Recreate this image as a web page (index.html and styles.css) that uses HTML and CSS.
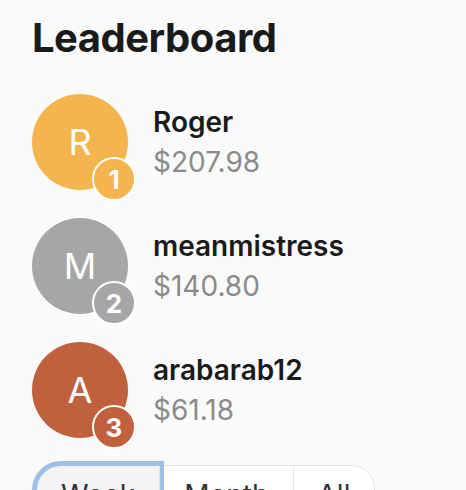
FILE: index.html
```html
<!DOCTYPE html>
<html>
<head>
<meta charset="utf-8">
<link rel="stylesheet" href="styles.css">
</head>
<body>
<main class="board">
  <h1 class="title">Leaderboard</h1>
  <ul class="list">
    <li class="row">
      <div class="avatar gold">R<span class="rank">1</span></div>
      <div class="info"><div class="name">Roger</div><div class="amount">$207.98</div></div>
    </li>
    <li class="row">
      <div class="avatar silver">M<span class="rank">2</span></div>
      <div class="info"><div class="name">meanmistress</div><div class="amount">$140.80</div></div>
    </li>
    <li class="row">
      <div class="avatar bronze">A<span class="rank">3</span></div>
      <div class="info"><div class="name">arabarab12</div><div class="amount">$61.18</div></div>
    </li>
  </ul>
  <div class="tabs">
    <button class="tab active">Week</button>
    <button class="tab">Month</button>
    <button class="tab">All</button>
  </div>
</main>
</body>
</html>
```
FILE: styles.css
```css
html, body {
  margin: 0;
  background: #fafafa;
  font-family: Inter, "Noto Sans", sans-serif;
  color: #1a1a1a;
}
.board {
  padding: 16px 32px 0;
}
.title {
  margin: 0;
  font-size: 40px;
  font-weight: 700;
  line-height: 44px;
  letter-spacing: -0.5px;
}
.list {
  list-style: none;
  margin: 34px 0 0;
  padding: 0;
  display: flex;
  flex-direction: column;
  gap: 28px;
}
.row {
  display: flex;
  align-items: center;
  gap: 25px;
}
.avatar {
  position: relative;
  width: 96px;
  height: 96px;
  border-radius: 50%;
  display: flex;
  align-items: center;
  justify-content: center;
  color: #fff;
  font-size: 36px;
  font-weight: 400;
  flex: none;
}
.gold { background: #f4b54e; }
.silver { background: #a6a6a6; }
.bronze { background: #c0603d; }
.rank {
  position: absolute;
  right: -8px;
  bottom: -11px;
  width: 40px;
  height: 40px;
  border: 2px solid #fff;
  border-radius: 50%;
  background: inherit;
  display: flex;
  align-items: center;
  justify-content: center;
  font-size: 26px;
  font-weight: 700;
}
.info {
  display: flex;
  flex-direction: column;
}
.name {
  font-size: 28px;
  font-weight: 600;
  line-height: 40px;
}
.amount {
  font-size: 28px;
  color: #8a8a8a;
  line-height: 40px;
}
.tabs {
  display: inline-flex;
  margin: 27px 0 0 4px;
  border: 1px solid #e4e4e4;
  border-radius: 24px;
  background: #fff;
}
.tab {
  font-family: inherit;
  font-size: 28px;
  line-height: 34px;
  color: #333;
  background: transparent;
  border: 0;
  border-left: 1px solid #e4e4e4;
  padding: 12px 24px;
}
.tab:first-child {
  border-left: 0;
  border-radius: 24px 0 0 24px;
}
.tab.active {
  background: #f4f4f4;
  outline: 5px solid #9dc0ea;
  outline-offset: 0;
}
```
